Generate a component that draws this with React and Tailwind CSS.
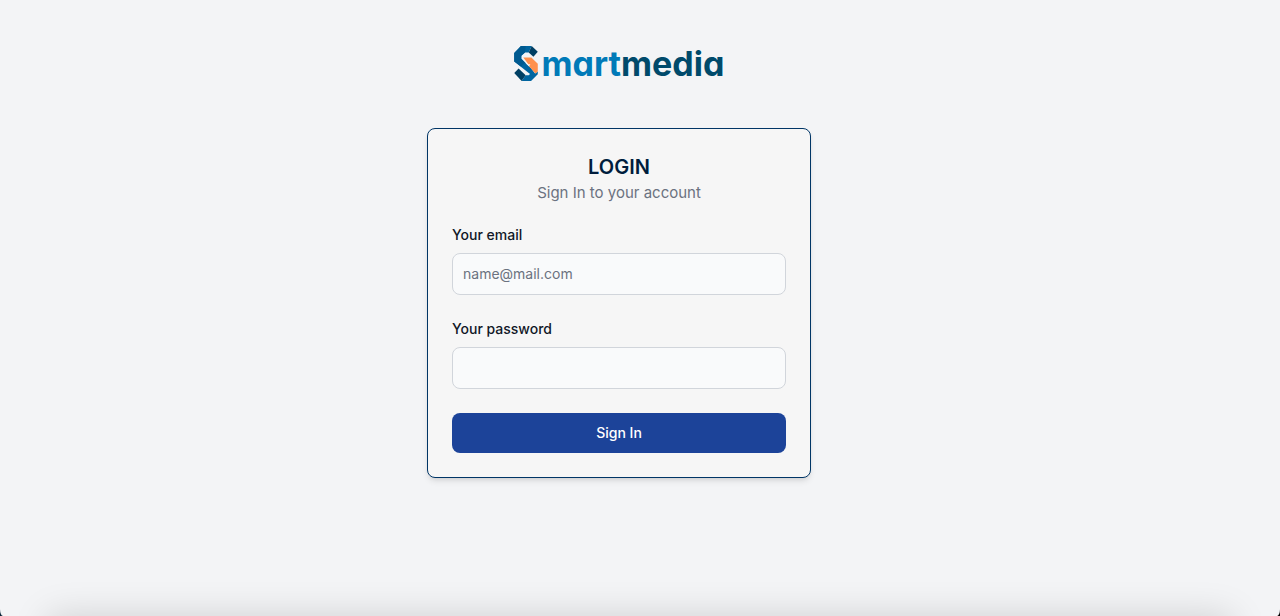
function LogoMark() {
  return (
    <svg viewBox="0 0 70 104" className="h-[35px] w-6" aria-hidden="true">
      <path fill="#0065a0" d="M20 0H52L43 19H32L21 29V38L50 66L62 82L70 76V84L50 104H22L34 87H43L47 83L0 46V21Z" />
      <path fill="#005a90" d="M0 21L20 0H34L32 19L21 29V38L32 50L20 61L0 46Z" />
      <path fill="#003f63" d="M52 0L70 17L57 32L43 19Z" />
      <path fill="#003f63" d="M0 80L13 67L34 87L22 104Z" />
      <path fill="#f3f4f6" d="M34 51L40 49L48 60L45 62Z" />
      <path fill="#ff914d" d="M27 34H51L70 53V76L63 82L44 60L48 54H42Z" />
    </svg>
  );
}

function Field({ id, label, ...props }) {
  return (
    <div>
      <label htmlFor={id} className="mb-2 block text-sm font-medium text-[#111827]">
        {label}
      </label>
      <input
        id={id}
        className="block w-full rounded-lg border border-[#d1d5db] bg-[#f9fafb] p-2.5 text-sm text-[#111827] placeholder:text-[#6b7280]"
        {...props}
      />
    </div>
  );
}

export default function App() {
  return (
    <div className="min-h-screen bg-linear-to-r from-[#0b2638] to-black font-['Inter',sans-serif]">
      <div className="relative flex min-h-screen flex-col items-center overflow-hidden rounded-b-[3px_7px] bg-[#f3f4f6] pt-11 pr-[42px]">
        <a href="/" aria-label="Smartmedia" className="flex h-[38px] items-center gap-1">
          <LogoMark />
          <span className="text-[34px] font-bold text-[#004a6b] [font-feature-settings:'cv11']">
            <span className="text-[#007ab8]">mart</span>media
          </span>
        </a>
        <main className="mt-[46px] w-full max-w-sm rounded-lg border border-[#003566] bg-[#f6f6f6] p-6 shadow-md">
          <h1 className="text-center text-xl font-semibold text-[#001d3d]">LOGIN</h1>
          <p className="text-center text-[15px] leading-6 text-[#6b7280]">Sign In to your account</p>
          <form className="mt-5 flex flex-col gap-6">
            <Field id="email" label="Your email" type="email" placeholder="name@mail.com" />
            <Field id="password" label="Your password" type="password" />
            <button type="button" className="w-full rounded-lg bg-[#1c4399] px-5 py-2.5 text-sm font-medium text-white">
              Sign In
            </button>
          </form>
        </main>
        <div className="pointer-events-none absolute inset-x-12 top-full h-12 shadow-[0_0_36px_rgba(0,0,0,0.15)]" />
      </div>
    </div>
  );
}
